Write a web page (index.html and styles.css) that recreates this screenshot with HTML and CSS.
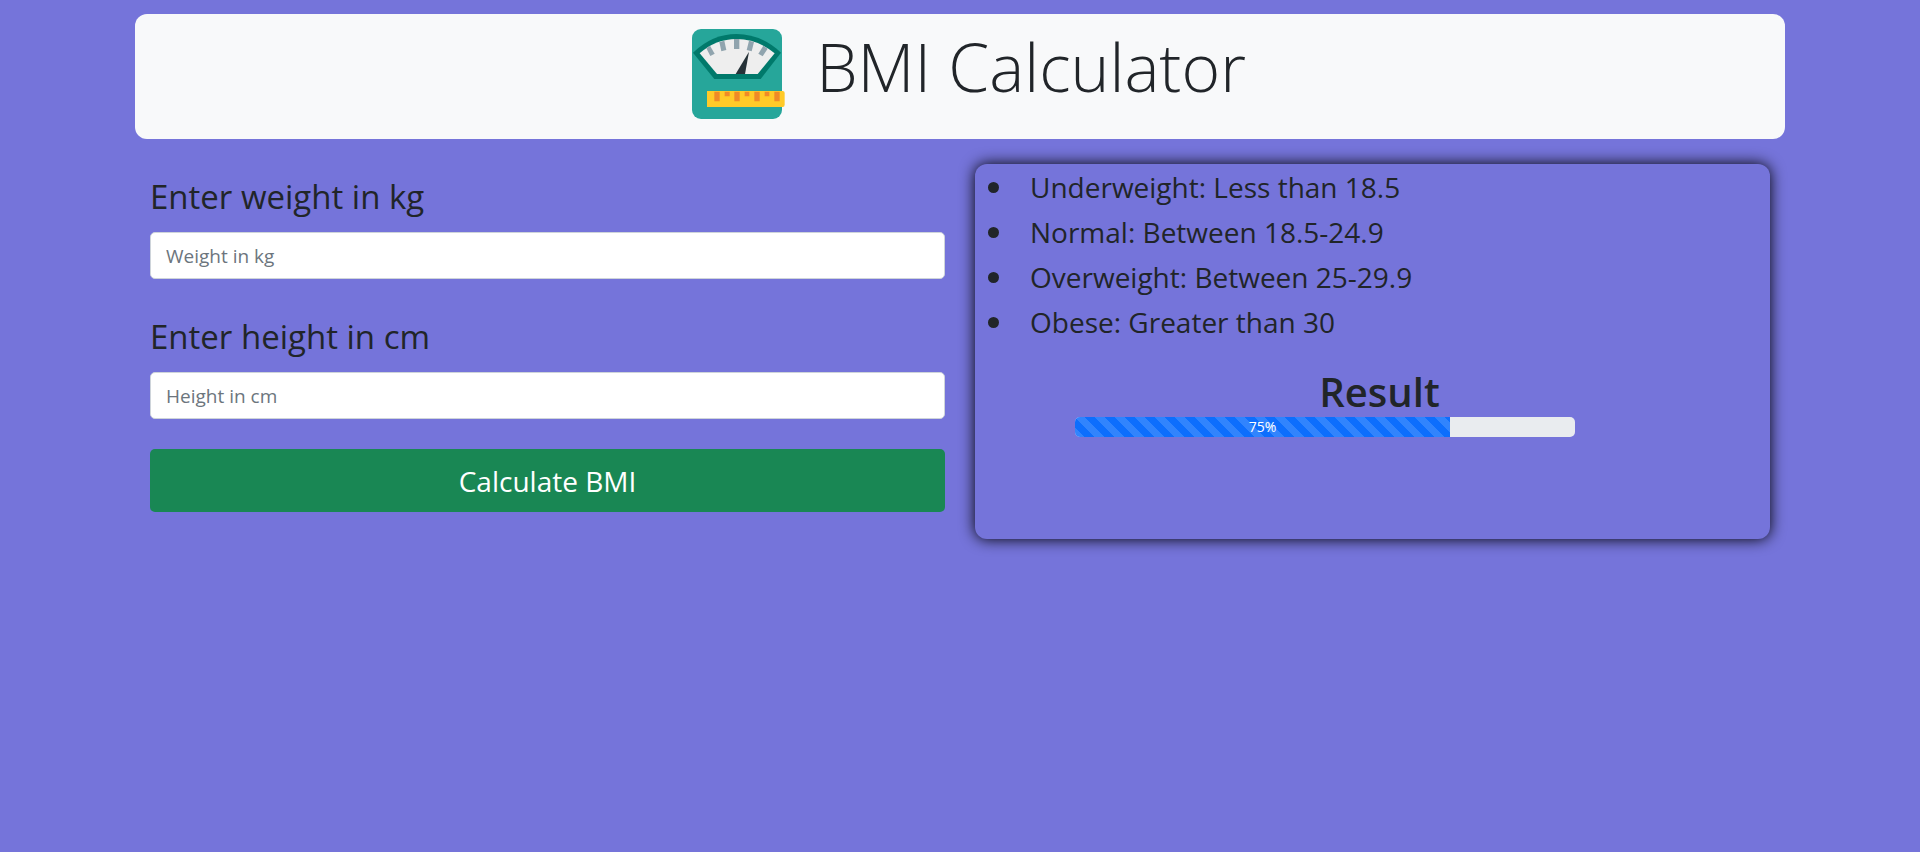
FILE: index.html
```
<!DOCTYPE html>
<html lang="en">
<head>
<meta charset="utf-8">
<meta name="viewport" content="width=device-width, initial-scale=1">
<title>BMI Calculator</title>
<link rel="stylesheet" href="styles.css">
</head>
<body>
<div class="container">
  <header class="banner">
    <svg class="logo" viewBox="39 27 279 270" aria-hidden="true">
      <rect x="39" y="27" width="270" height="270" rx="27" fill="#26a69a"/>
      <path d="M42 98Q100 42 173 42T306 98L245 177H106Z" fill="#00796b"/>
      <path d="M62 100Q110 57 173 57T287 100L236 162H114Z" fill="#eeeeee"/>
      <g fill="#90a4ae">
        <path d="M82 85L93 77L107 101L94 108Z"/>
        <path d="M121 66L136 62L142 90L127 94Z"/>
        <path d="M165 57H181V87H165Z"/>
        <path d="M210 62L225 66L218 94L203 90Z"/>
        <path d="M253 77L266 86L251 109L238 101Z"/>
      </g>
      <path d="M210 95L198 162H170Z" fill="#263238"/>
      <path d="M84 213H311Q317 213 317 219V254Q317 261 311 261H84Z" fill="#ffca28"/>
      <g fill="#ef8b27">
        <path d="M106 215H122V244H106ZM137 215H152V229H137ZM166 215H182V244H166ZM197 215H211V229H197ZM226 215H242V244H226ZM257 215H271V229H257ZM286 215H302V244H286Z"/>
      </g>
    </svg>
    <h1 class="title">BMI Calculator</h1>
  </header>
  <main class="columns">
    <form class="form">
      <label class="label" for="weight">Enter weight in kg</label>
      <input class="field" id="weight" type="text" placeholder="Weight in kg">
      <label class="label" for="height">Enter height in cm</label>
      <input class="field" id="height" type="text" placeholder="Height in cm">
      <button class="submit" type="button">Calculate BMI</button>
    </form>
    <section class="panel">
      <ul class="ranges">
        <li>Underweight: Less than 18.5</li>
        <li>Normal: Between 18.5-24.9</li>
        <li>Overweight: Between 25-29.9</li>
        <li>Obese: Greater than 30</li>
      </ul>
      <h2 class="result">Result</h2>
      <div class="progress" role="progressbar" aria-label="Result" aria-valuenow="75" aria-valuemin="0" aria-valuemax="100">
        <div class="bar" style="width: 75%">75%</div>
      </div>
    </section>
  </main>
</div>
</body>
</html>
```
FILE: styles.css
```
* { box-sizing: border-box; }

body {
  margin: 0;
  background: #7574da;
  color: #212529;
  font-family: "Open Sans", "Noto Sans", sans-serif;
  font-size: 20px;
  line-height: 30px;
}

.container {
  max-width: 1650px;
  margin: 0 auto;
  padding-top: 14px;
}

.banner {
  display: flex;
  justify-content: center;
  gap: 31px;
  padding: 15px 0 20px 18px;
  border-radius: 12px;
  background: #f8f9fa;
}

.logo { width: 93px; height: 90px; }

.title {
  margin: 0;
  font-size: 66px;
  font-weight: 300;
  line-height: 74px;
}

.columns {
  display: grid;
  grid-template-columns: 1fr 1fr;
  gap: 30px;
  padding: 25px 15px;
}

.form {
  display: flex;
  flex-direction: column;
  padding-top: 12px;
}

.label {
  margin-bottom: 14px;
  font-size: 33px;
  line-height: 42px;
}

.field {
  height: 47px;
  margin-bottom: 37px;
  padding: 0 15px;
  border: 1px solid #ced4da;
  border-radius: 5px;
  background: #fff;
  color: #212529;
  font: inherit;
  font-size: 19px;
}

.field::placeholder { color: #6c757d; opacity: 1; }

.submit {
  height: 63px;
  border: 0;
  border-radius: 5px;
  background: #198754;
  color: #fff;
  font: inherit;
  font-size: 28px;
}

.field + .submit { margin-top: -7px; }

.panel {
  min-height: 375px;
  border-radius: 12px;
  box-shadow: 0 0 15px #000;
  background: #7574da;
}

.ranges {
  margin: 0;
  padding: 1px 0 0 13px;
  list-style: none;
  font-size: 28px;
  line-height: 45px;
}

.ranges li {
  display: flex;
  align-items: center;
  gap: 31px;
}

.ranges li::before {
  content: "";
  width: 11px;
  height: 11px;
  border-radius: 50%;
  background: #212529;
}

.result {
  margin: 21px 0 0;
  padding-left: 14px;
  font-size: 40px;
  font-weight: 600;
  line-height: 51px;
  text-align: center;
}

.progress {
  width: 500px;
  max-width: 80%;
  height: 20px;
  margin-left: 100px;
  overflow: hidden;
  border-radius: 5px;
  background: #e9ecef;
}

.bar {
  height: 100%;
  background: #0d6efd linear-gradient(45deg, rgba(255, 255, 255, .15) 25%, transparent 25%, transparent 50%, rgba(255, 255, 255, .15) 50%, rgba(255, 255, 255, .15) 75%, transparent 75%) 0 0 / 20px 20px;
  color: #fff;
  font-size: 14px;
  line-height: 20px;
  text-align: center;
}
```
